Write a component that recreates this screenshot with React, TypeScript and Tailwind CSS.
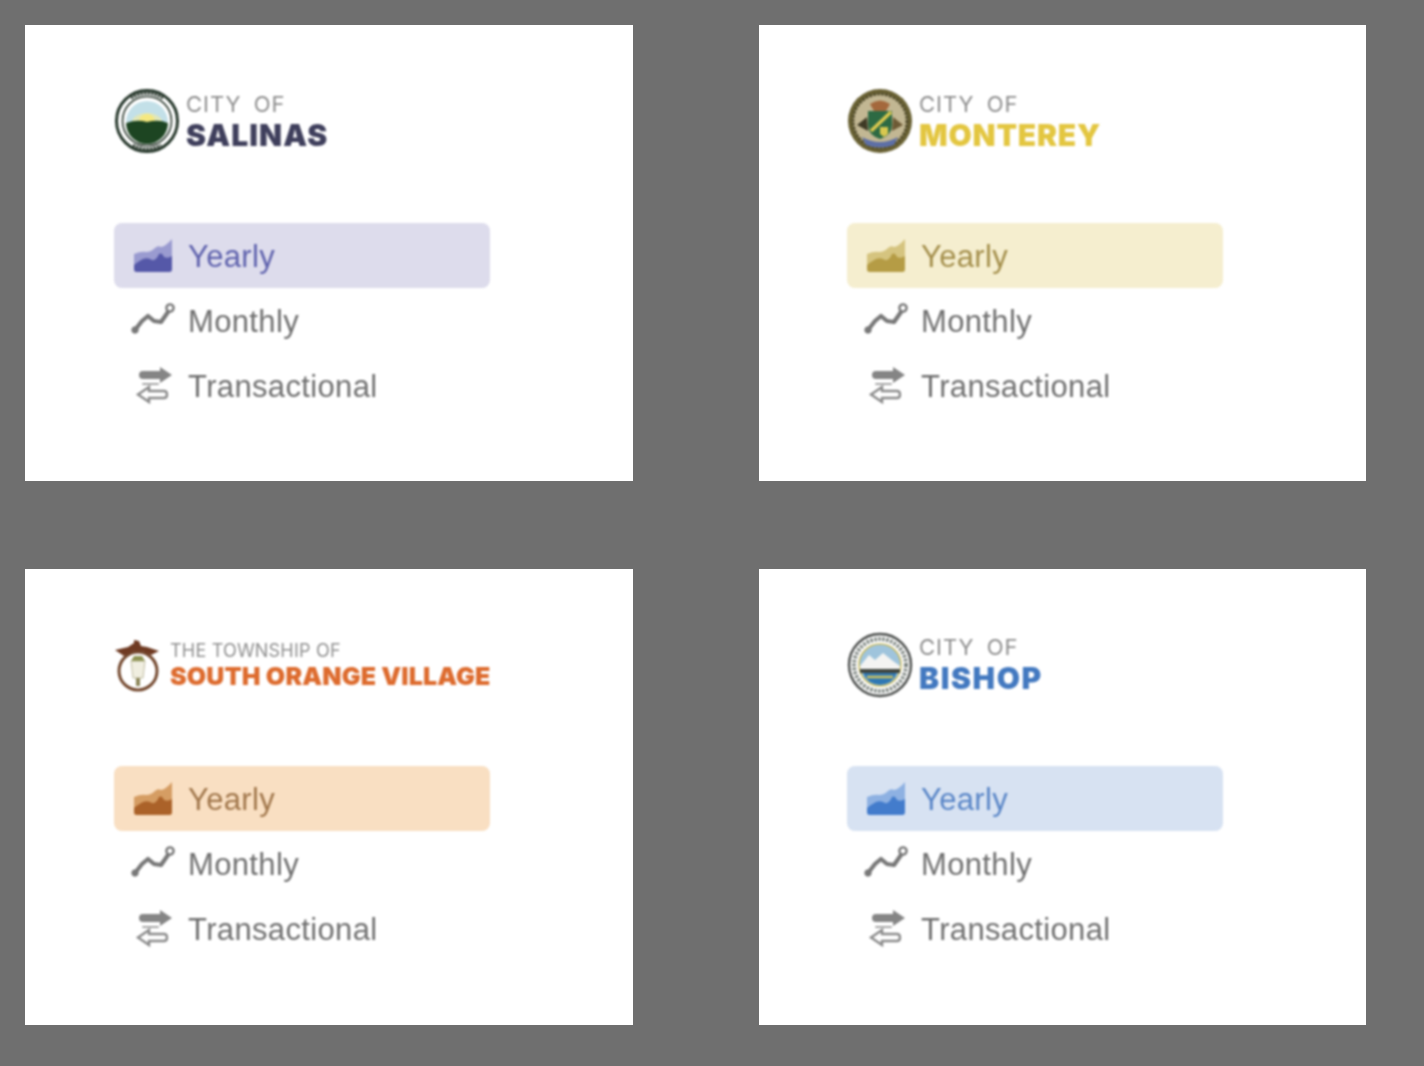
import React from 'react';

type Theme = {
  bar: string;
  accent: string;
  soft: string;
  text: string;
};

function YearlyIcon({ accent, soft }: { accent: string; soft: string }) {
  return (
    <svg width="40" height="34" viewBox="0 0 40 34" className="shrink-0">
      <path d="M1 15 Q8 12 13 13 Q18 13 22 9 Q25 6 28 8 Q33 7 39 0 V30 Q39 33 36 33 H4 Q1 33 1 30 Z" fill={soft} />
      <path d="M1 26 Q6 22 10 20 Q15 18 19 21 Q23 22 26 15 Q29 13 31 18 Q35 20 39 17 V30 Q39 33 36 33 H4 Q1 33 1 30 Z" fill={accent} />
    </svg>
  );
}

function MonthlyIcon() {
  return (
    <svg width="46" height="36" viewBox="0 0 46 36" className="shrink-0" fill="none" stroke="#787878">
      <path d="M5 27 L12 18 L18 13 L24 18 L31 19 L38 9" strokeWidth="4.2" strokeLinecap="round" strokeLinejoin="round" />
      <circle cx="5" cy="27" r="3.2" fill="#787878" strokeWidth="1" />
      <circle cx="40" cy="5" r="3.6" fill="#fff" strokeWidth="2.4" />
    </svg>
  );
}

function TransactionalIcon() {
  return (
    <svg width="40" height="38" viewBox="0 0 40 38" className="shrink-0">
      <path d="M9 4 H26 V0 L38 8 L26 16 V12 H9 Q5 12 5 8 Q5 4 9 4 Z" fill="#858585" />
      <path d="M9 17 H24" stroke="#a6a6a6" strokeWidth="2" strokeLinecap="round" />
      <path d="M30 24 H15 V20 L4 27.5 L15 35 V31 H30 Q33 31 33 27.5 Q33 24 30 24 Z" fill="#fff" stroke="#8a8a8a" strokeWidth="2.4" />
    </svg>
  );
}

function SalinasSeal() {
  return (
    <svg width="66" height="68" viewBox="0 0 66 68">
      <circle cx="33" cy="33" r="30.5" fill="#fff" stroke="#27382c" strokeWidth="3" />
      <circle cx="33" cy="33" r="24.5" fill="none" stroke="#2d3b30" strokeWidth="1.6" />
      <path d="M17 10 A28 28 0 0 1 49 10" fill="none" stroke="#39463c" strokeWidth="3.5" strokeDasharray="2.5 1" />
      <path d="M19 57 A28 28 0 0 0 47 57" fill="none" stroke="#39463c" strokeWidth="3" strokeDasharray="2.5 1" />
      <path d="M12 34 A21 21 0 0 1 54 34 Z" fill="#c3e0e8" />
      <path d="M25 34 A8 8 0 0 1 41 34 Z" fill="#f3e45c" />
      <path d="M18 34 A15 9 0 0 1 48 34 Z" fill="#f6eb97" opacity="0.6" />
      <path d="M12 35 Q23 31 33 34 Q45 31 54 35 A21 21 0 0 1 12 35 Z" fill="#1d4522" />
    </svg>
  );
}

function MontereySeal() {
  return (
    <svg width="66" height="68" viewBox="0 0 66 68">
      <circle cx="33" cy="33" r="32" fill="#6a6234" />
      <circle cx="33" cy="33" r="27" fill="#c2b793" stroke="#4f4a2c" strokeWidth="3" strokeDasharray="2.5 1.5" />
      <path d="M23 16 Q33 9 43 16 L39 23 H27 Z" fill="#a4683c" />
      <path d="M21 23 H45 V37 Q45 47 33 51 Q21 47 21 37 Z" fill="#2d6a43" />
      <path d="M24 43 L44 24" stroke="#dcc94f" strokeWidth="3.5" />
      <path d="M33 39 H41 V46 L37 49 L33 46 Z" fill="#d8c84f" />
      <path d="M10 37 L20 29 L21 43 Z" fill="#3e3a25" />
      <path d="M56 37 L46 29 L45 43 Z" fill="#6d5a35" />
      <path d="M15 49 Q33 59 51 49 L47 57 Q33 62 19 57 Z" fill="#5d6fa6" />
    </svg>
  );
}

function OrangeSeal() {
  return (
    <svg width="46" height="54" viewBox="0 0 46 54">
      <circle cx="24" cy="32" r="19" fill="#fff" stroke="#74492f" strokeWidth="3" />
      <path d="M1 11 L14 8 L20 4 L20 1 L25 2 L27 7 L33 8 L45 12 L37 16 L28 12 L20 12 L10 17 Z" fill="#6f3a22" />
      <path d="M17 22 H31 L29 39 H19 Z" fill="#f0eee0" stroke="#c4c0a6" strokeWidth="1" />
      <path d="M20 17 H28 L31 22 H17 Z" fill="#8f9455" />
      <rect x="22" y="39" width="4" height="8" fill="#8c8658" />
    </svg>
  );
}

function BishopSeal() {
  return (
    <svg width="66" height="68" viewBox="0 0 66 68">
      <circle cx="33" cy="33" r="31" fill="#fff" stroke="#4b4e4c" strokeWidth="2.4" />
      <circle cx="33" cy="33" r="26" fill="none" stroke="#7d8580" strokeWidth="4" strokeDasharray="2.5 1.5" />
      <circle cx="33" cy="33" r="21" fill="#9fc4dc" stroke="#c9bb63" strokeWidth="1.5" />
      <path d="M13 34 L22 23 L28 28 L36 21 L46 29 L53 34 V37 H13 Z" fill="#f4f4f2" />
      <path d="M13 37 H53 V41 H13 Z" fill="#40463f" />
      <path d="M16 41 H50 Q46 52 33 53 Q20 52 16 41 Z" fill="#2f78b4" />
      <path d="M20 45 H46" stroke="#d0c15c" strokeWidth="2.5" />
    </svg>
  );
}

function Nav({ theme }: { theme: Theme }) {
  return (
    <div className="mt-[68px] w-[376px] text-[31px] tracking-[0.35px] font-['Liberation_Sans',sans-serif]">
      <div className="flex h-[65px] items-center rounded-lg pl-[19px]" style={{ backgroundColor: theme.bar, color: theme.text }}>
        <YearlyIcon accent={theme.accent} soft={theme.soft} />
        <span className="ml-[15px] pt-1">Yearly</span>
      </div>
      <div className="flex h-[65px] items-center pl-[16px] text-[#707070]">
        <MonthlyIcon />
        <span className="ml-[12px] pt-1">Monthly</span>
      </div>
      <div className="flex h-[65px] items-center pl-[20px] text-[#707070]">
        <TransactionalIcon />
        <span className="ml-[14px] pt-1">Transactional</span>
      </div>
    </div>
  );
}

function CityLogo({ seal, name, color, height, track, pad }: { seal: React.ReactNode; name: string; color: string; height: string; track: string; pad: string }) {
  return (
    <div className={`flex items-start gap-[6px] ${height}`}>
      {seal}
      <div className={`flex flex-col font-['Inter',sans-serif] ${pad}`}>
        <span className="text-[22px] leading-[28px] font-normal tracking-[1px] text-[#8c8c8c] [word-spacing:5px]">CITY OF</span>
        <span className={`text-[30px] leading-[34px] font-black ${track}`} style={{ color }}>{name}</span>
      </div>
    </div>
  );
}

function Card({ logo, theme, left }: { logo: React.ReactNode; theme: Theme; left: string }) {
  return (
    <div className={`h-[456px] bg-white pt-[63px] ${left}`}>
      <div className="blur-[0.8px]">
        {logo}
        <Nav theme={theme} />
      </div>
    </div>
  );
}

export default function App() {
  return (
    <div className="h-[1066px] w-[1424px] overflow-hidden bg-[#6f6f6f] pl-[25px] pt-[25px]">
      <div className="grid grid-cols-[608px_607px] gap-x-[126px] gap-y-[88px]">
        <Card
          left="pl-[89px]"
          logo={<CityLogo height="h-[67px]" pad="pt-[2px]" track="tracking-[1.1px]" seal={<SalinasSeal />} name="SALINAS" color="#3f3f5c" />}
          theme={{ bar: '#dddcec', accent: '#5558a8', soft: '#9a9bd0', text: '#5f62ad' }}
        />
        <Card
          left="pl-[88px]"
          logo={<CityLogo height="h-[67px]" pad="pt-[2px]" track="tracking-[0.8px]" seal={<MontereySeal />} name="MONTEREY" color="#e3c640" />}
          theme={{ bar: '#f5eecf', accent: '#b59c45', soft: '#d5c47f', text: '#a48f4c' }}
        />
        <Card
          left="pl-[89px]"
          logo={
            <div className="flex h-[66px] items-start gap-[10px] pt-[7px]">
              <OrangeSeal />
              <div className="flex flex-col pt-[2px] font-['Inter',sans-serif]">
                <span className="text-[18px] leading-[20px] font-normal tracking-[0.2px] text-[#8f8f8f]">THE TOWNSHIP OF</span>
                <span className="text-[25px] leading-[30px] font-black tracking-[0.15px] text-[#dd6b2e]">SOUTH ORANGE VILLAGE</span>
              </div>
            </div>
          }
          theme={{ bar: '#f9dfc2', accent: '#ab6229', soft: '#d59d63', text: '#a1774c' }}
        />
        <Card
          left="pl-[88px]"
          logo={<CityLogo height="h-[66px]" pad="pt-[1px]" track="tracking-[1.6px]" seal={<BishopSeal />} name="BISHOP" color="#4379c0" />}
          theme={{ bar: '#d7e2f2', accent: '#437ccc', soft: '#8eb1e2', text: '#5a86c7' }}
        />
      </div>
    </div>
  );
}
